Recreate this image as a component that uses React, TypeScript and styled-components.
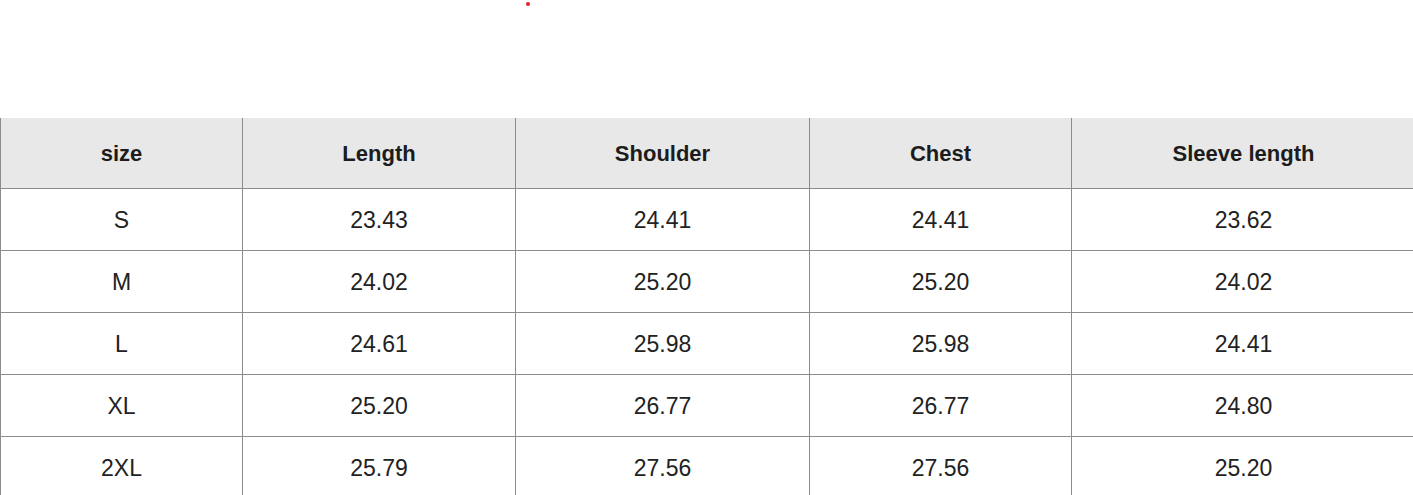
import React from "react";
import styled, { createGlobalStyle } from "styled-components";

const Global = createGlobalStyle`
  html, body { margin: 0; padding: 0; background: #fff; }
  body { font-family: "Liberation Sans", Arial, sans-serif; color: #222; overflow: hidden; }
`;

const Page = styled.div`
  position: relative;
  width: 1413px;
  height: 495px;
  overflow: hidden;
  padding-top: 118px;
  box-sizing: border-box;
`;

const Dot = styled.span`
  position: absolute;
  left: 526px;
  top: 2px;
  width: 4px;
  height: 4px;
  border-radius: 50%;
  background: #e8202a;
`;

const Table = styled.table`
  border-collapse: collapse;
  table-layout: fixed;
  width: 1415px;
`;

const Th = styled.th`
  background: #e8e8e8;
  height: 70px;
  box-sizing: border-box;
  padding: 3px 0 0;
  font-size: 22px;
  font-weight: 700;
  color: #1c1c1c;
  text-align: center;
  border: 1px solid #8c8c8c;
  border-top: none;
`;

const Td = styled.td`
  height: 62px;
  box-sizing: border-box;
  padding: 2px 0 0;
  font-size: 23px;
  font-weight: 400;
  color: #222;
  text-align: center;
  border: 1px solid #8c8c8c;
`;

const widths = [242, 273, 294, 262, 344];
const headers = ["size", "Length", "Shoulder", "Chest", "Sleeve length"];
const rows = [
  ["S", "23.43", "24.41", "24.41", "23.62"],
  ["M", "24.02", "25.20", "25.20", "24.02"],
  ["L", "24.61", "25.98", "25.98", "24.41"],
  ["XL", "25.20", "26.77", "26.77", "24.80"],
  ["2XL", "25.79", "27.56", "27.56", "25.20"],
];

export default function App() {
  return (
    <Page>
      <Global />
      <Dot />
      <Table>
        <colgroup>
          {widths.map((w, i) => (
            <col key={i} style={{ width: w }} />
          ))}
        </colgroup>
        <thead>
          <tr>
            {headers.map((h) => (
              <Th key={h}>{h}</Th>
            ))}
          </tr>
        </thead>
        <tbody>
          {rows.map((r) => (
            <tr key={r[0]}>
              {r.map((c, i) => (
                <Td key={i}>{c}</Td>
              ))}
            </tr>
          ))}
        </tbody>
      </Table>
    </Page>
  );
}
